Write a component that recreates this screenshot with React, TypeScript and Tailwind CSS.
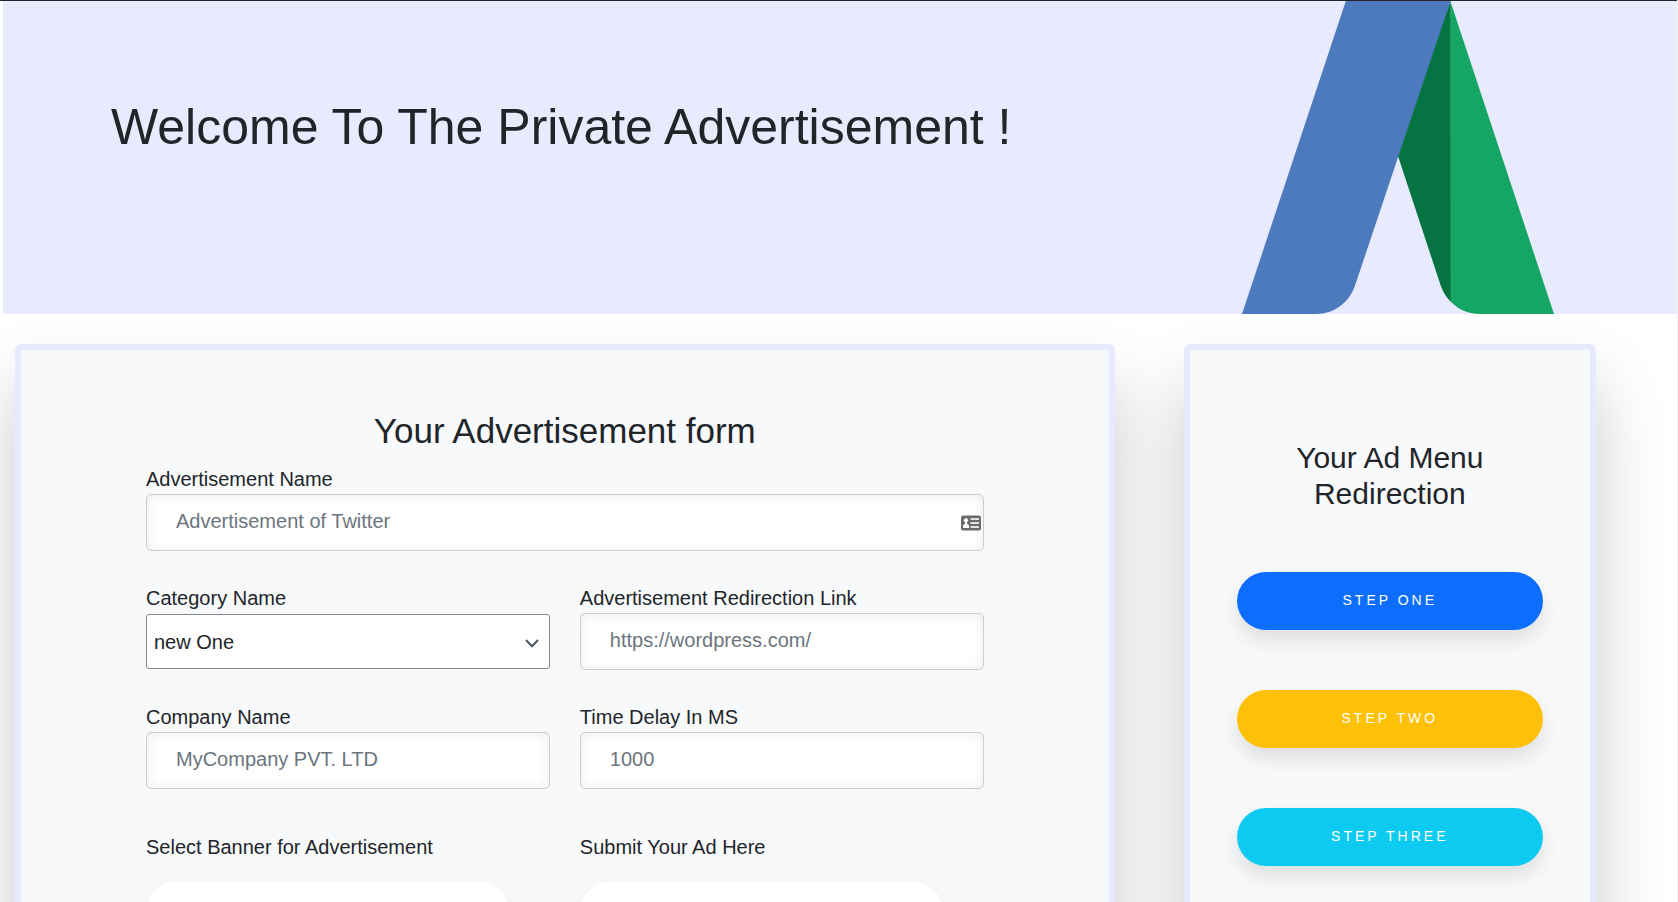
import React from "react";

const inputClass =
  "block h-[57px] w-full rounded-[5px] border border-[#cbcdd0] bg-white px-[29px] pb-[2px] text-[20px] text-[#212529] shadow-[inset_0_1px_12px_rgba(0,0,0,0.08)] outline-none placeholder:text-[#6c757d]";

const pillShadow = "shadow-[0_10px_20px_rgba(0,0,0,0.11)]";

function AdLogo() {
  return (
    <svg viewBox="0 0 312 313" className="h-[313px] w-[312px] shrink-0" aria-hidden="true">
      <path d="M208.3 0 L312 313 H238 C225 313 216 308 208 300 Z" fill="#15a564" />
      <path d="M208.5 0 L154 150 L156.3 156 L198.5 284 C201 291 204 296 208.5 300.4 Z" fill="#087342" />
      <path d="M103.8 0 H208.5 L113.2 284 C107 302 92 313 74 313 H0 Z" fill="#4d7abd" />
    </svg>
  );
}

function ContactCardIcon() {
  return (
    <svg viewBox="0 0 20 16" className="h-[16px] w-[20px]" aria-hidden="true">
      <rect x="0" y="0.5" width="20" height="15" rx="2" fill="#6b6b6b" />
      <circle cx="5" cy="5.3" r="2.1" fill="#fff" />
      <path d="M4 6.5 H6 V8.6 L8 10.4 V13 H2 V10.4 L4 8.6 Z" fill="#fff" />
      <path d="M9.5 4 H18 M9.5 8 H18 M9.5 12 H18" stroke="#e0e0e0" strokeWidth="1.8" />
    </svg>
  );
}

function Field({
  id,
  label,
  className = "",
  children,
}: {
  id: string;
  label: string;
  className?: string;
  children: React.ReactNode;
}) {
  return (
    <div className={className}>
      <label htmlFor={id} className="block text-[20px] leading-[30px]">
        {label}
      </label>
      {children}
    </div>
  );
}

function PillAction({ id, label }: { id: string; label: string }) {
  return (
    <div>
      <label htmlFor={id} className="block text-[20px] leading-[30px]">
        {label}
      </label>
      <button
        id={id}
        type="button"
        className="mt-[20px] block h-[58px] w-[90%] rounded-full bg-white shadow-[0_10px_20px_rgba(0,0,0,0.08)]"
      />
    </div>
  );
}

const steps = [
  { label: "STEP ONE", color: "bg-[#0d6efd]" },
  { label: "STEP TWO", color: "bg-[#ffc107]" },
  { label: "STEP THREE", color: "bg-[#0dcaf0]" },
];

const cardClass =
  "rounded-[6px] border-[6px] border-[#e7eafe] bg-[#f8f9fb] shadow-[0_40px_70px_rgba(0,0,0,0.21)]";

export default function App() {
  return (
    <div className="h-screen overflow-y-auto border-r border-[#f0f0f0] bg-white font-['Liberation_Sans',Arial,sans-serif] text-[#212529] [scrollbar-width:none]">
      <div className="h-px bg-[#212529]" />
      <header className="relative z-10 ml-[3px] flex justify-between bg-[#e8ebfe] pr-[123px] pl-[108px]">
        <h1 className="pt-[96px] text-[50px] leading-[60px]">Welcome To The Private Advertisement !</h1>
        <AdLogo />
      </header>

      <main className="grid grid-cols-[8fr_3fr] gap-[69px] pt-[30px] pr-[81px] pb-[60px] pl-[15px]">
        <section className={`${cardClass} px-[125px] pt-[60px] pb-[60px]`}>
          <h2 className="mb-[12px] text-center text-[35px] leading-[42px]">Your Advertisement form</h2>
          <form onSubmit={(e) => e.preventDefault()}>
            <div className="grid grid-cols-2 gap-x-[30px] gap-y-[32px]">
              <Field id="ad-name" label="Advertisement Name" className="col-span-2">
                <div className="relative">
                  <input id="ad-name" type="text" placeholder="Advertisement of Twitter" className={inputClass} />
                  <span className="pointer-events-none absolute inset-y-0 right-[3px] flex items-center">
                    <ContactCardIcon />
                  </span>
                </div>
              </Field>
              <Field id="category" label="Category Name">
                <div className="relative flex h-[57px] items-center">
                  <select
                    id="category"
                    className="h-[55px] w-full appearance-none rounded-[3px] border border-[#82878c] bg-white px-[7px] text-[20px] outline-none"
                  >
                    <option>new One</option>
                  </select>
                  <svg
                    viewBox="0 0 14 9"
                    className="pointer-events-none absolute right-[11px] bottom-[22px] h-[9px] w-[14px]"
                    aria-hidden="true"
                  >
                    <path d="M1 1 L7 7.2 L13 1" fill="none" stroke="#50575e" strokeWidth="2" />
                  </svg>
                </div>
              </Field>
              <Field id="link" label="Advertisement Redirection Link">
                <input id="link" type="url" placeholder="https://wordpress.com/" className={inputClass} />
              </Field>
              <Field id="company" label="Company Name">
                <input id="company" type="text" placeholder="MyCompany PVT. LTD" className={inputClass} />
              </Field>
              <Field id="delay" label="Time Delay In MS">
                <input id="delay" type="text" placeholder="1000" className={inputClass} />
              </Field>
            </div>
            <div className="mt-[43px] grid grid-cols-2 gap-x-[30px]">
              <PillAction id="banner" label="Select Banner for Advertisement" />
              <PillAction id="submit" label="Submit Your Ad Here" />
            </div>
          </form>
        </section>

        <aside className={`${cardClass} px-[47px] pt-[90px] pb-[60px]`}>
          <h3 className="px-[40px] text-center text-[30px] leading-[36px]">Your Ad Menu Redirection</h3>
          <div className="mt-[60px] flex flex-col gap-[60px]">
            {steps.map((step) => (
              <button
                key={step.label}
                type="button"
                className={`${step.color} ${pillShadow} h-[58px] w-full rounded-full pb-[2px] text-[14px] tracking-[3px] text-white`}
              >
                {step.label}
              </button>
            ))}
          </div>
        </aside>
      </main>
    </div>
  );
}
